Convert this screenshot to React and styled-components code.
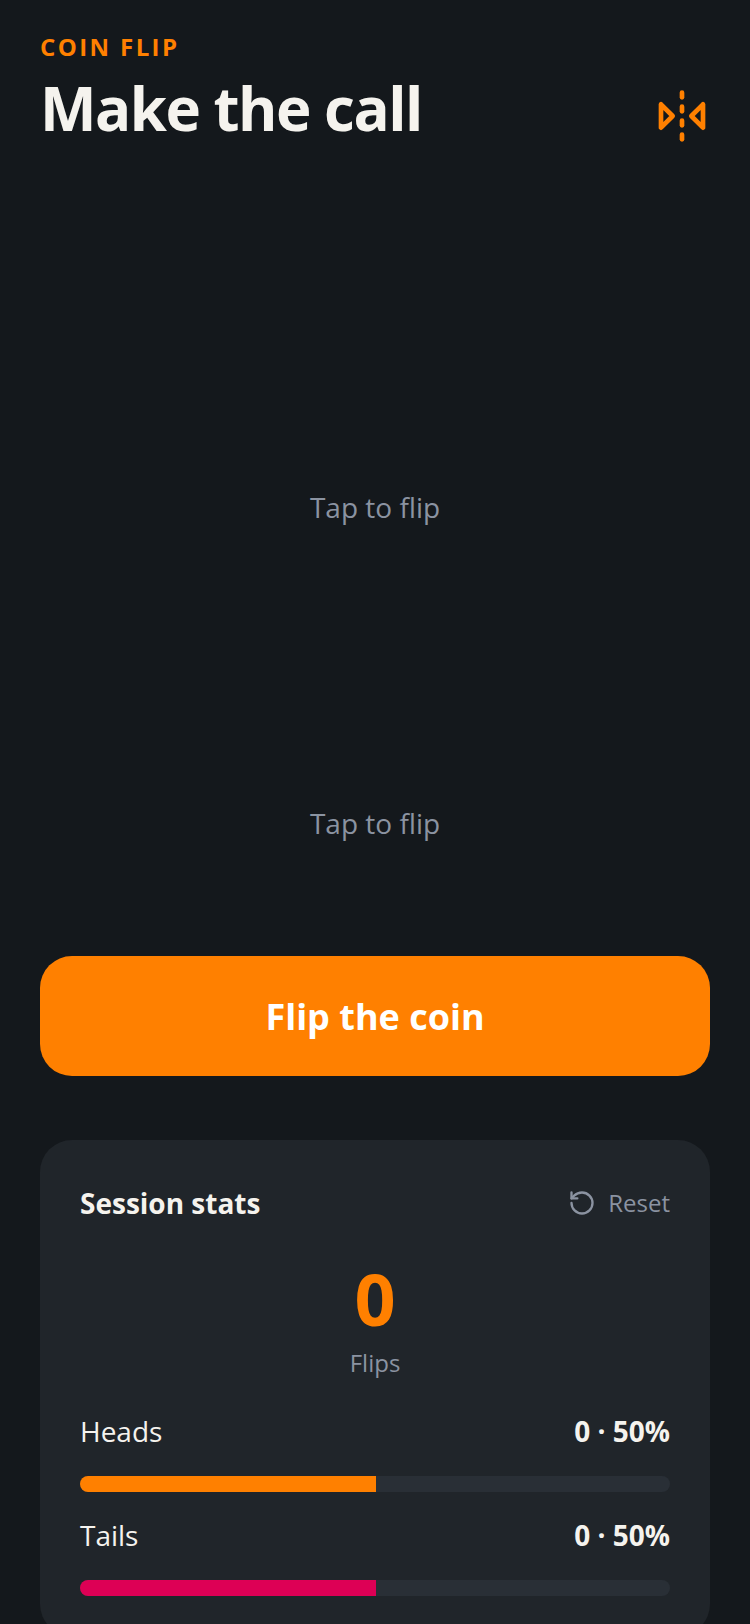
import React from 'react'
import styled, { createGlobalStyle } from 'styled-components'
import { FlipHorizontal2, RotateCcw } from 'lucide-react'

const GlobalStyle = createGlobalStyle`
  html, body {
    margin: 0;
    padding: 0;
    background: #14181c;
    overflow: hidden;
  }
  * {
    box-sizing: border-box;
  }
`

const Page = styled.div`
  width: 750px;
  height: 1624px;
  padding: 0 40px;
  overflow: hidden;
  background: #14181c;
  color: #f5f3ee;
  font-family: 'Open Sans', sans-serif;
`

const Header = styled.header`
  display: flex;
  justify-content: space-between;
  align-items: flex-end;
  height: 160px;
  padding: 30px 0 16px;
`

const Eyebrow = styled.div`
  font-size: 24px;
  line-height: 32px;
  font-weight: 700;
  letter-spacing: 2.4px;
  color: #ff8000;
`

const Title = styled.h1`
  margin: 9px 0 0;
  font-size: 60px;
  line-height: 72px;
  font-weight: 700;
  letter-spacing: -1.5px;
  color: #f5f3ee;
`

const FlipIcon = styled(FlipHorizontal2)`
  display: block;
  color: #ff8000;
`

const Stage = styled.div`
  display: flex;
  flex-direction: column;
  align-items: center;
  gap: 278px;
  height: 796px;
  padding-top: 328px;
`

const Hint = styled.div`
  font-size: 28px;
  line-height: 38px;
  color: #8b93a1;
`

const FlipButton = styled.button`
  display: block;
  width: 100%;
  height: 120px;
  border: 0;
  border-radius: 32px;
  background: #ff8000;
  color: #fff;
  font-family: inherit;
  font-size: 36px;
  font-weight: 700;
`

const Card = styled.section`
  margin-top: 64px;
  padding: 42px 40px 40px;
  border-radius: 32px;
  background: #20252a;
`

const CardHead = styled.div`
  display: flex;
  justify-content: space-between;
  align-items: center;
`

const CardTitle = styled.div`
  font-size: 28px;
  line-height: 42px;
  font-weight: 700;
`

const ResetButton = styled.div`
  display: flex;
  align-items: center;
  gap: 12px;
  font-size: 24px;
  line-height: 42px;
  color: #8b93a1;
`

const Total = styled.div`
  margin-top: 30px;
  text-align: center;
  font-size: 72px;
  line-height: 88px;
  font-weight: 700;
  color: #ff8000;
`

const TotalLabel = styled.div`
  margin-top: 5px;
  text-align: center;
  font-size: 24px;
  line-height: 32px;
  color: #8b93a1;
`

const StatRow = styled.div`
  display: flex;
  justify-content: space-between;
  align-items: center;
  margin-top: ${(p) => p.$top}px;
  font-size: 28px;
  line-height: 38px;
`

const StatValue = styled.span`
  font-weight: 700;
`

const Track = styled.div`
  height: 16px;
  margin-top: 26px;
  border-radius: 8px;
  overflow: hidden;
  background: #292f36;
`

const Fill = styled.div`
  height: 100%;
  background: ${(p) => p.$color};
`

const stats = [
  { name: 'Heads', count: 0, pct: 50, color: '#ff8000', top: 33 },
  { name: 'Tails', count: 0, pct: 50, color: '#dd0055', top: 24 },
]

const App = () => {
  return (
    <Page>
      <GlobalStyle />
      <Header>
        <div>
          <Eyebrow>COIN FLIP</Eyebrow>
          <Title>Make the call</Title>
        </div>
        <FlipIcon size={56} strokeWidth={2} />
      </Header>
      <Stage>
        <Hint>Tap to flip</Hint>
        <Hint>Tap to flip</Hint>
      </Stage>
      <FlipButton>Flip the coin</FlipButton>
      <Card>
        <CardHead>
          <CardTitle>Session stats</CardTitle>
          <ResetButton>
            <RotateCcw size={28} strokeWidth={2} />
            Reset
          </ResetButton>
        </CardHead>
        <Total>0</Total>
        <TotalLabel>Flips</TotalLabel>
        {stats.map((s) => (
          <React.Fragment key={s.name}>
            <StatRow $top={s.top}>
              <span>{s.name}</span>
              <StatValue>{s.count} · {s.pct}%</StatValue>
            </StatRow>
            <Track>
              <Fill $color={s.color} style={{ width: `calc(${s.pct}% + 1px)` }} />
            </Track>
          </React.Fragment>
        ))}
      </Card>
    </Page>
  )
}

export default App
